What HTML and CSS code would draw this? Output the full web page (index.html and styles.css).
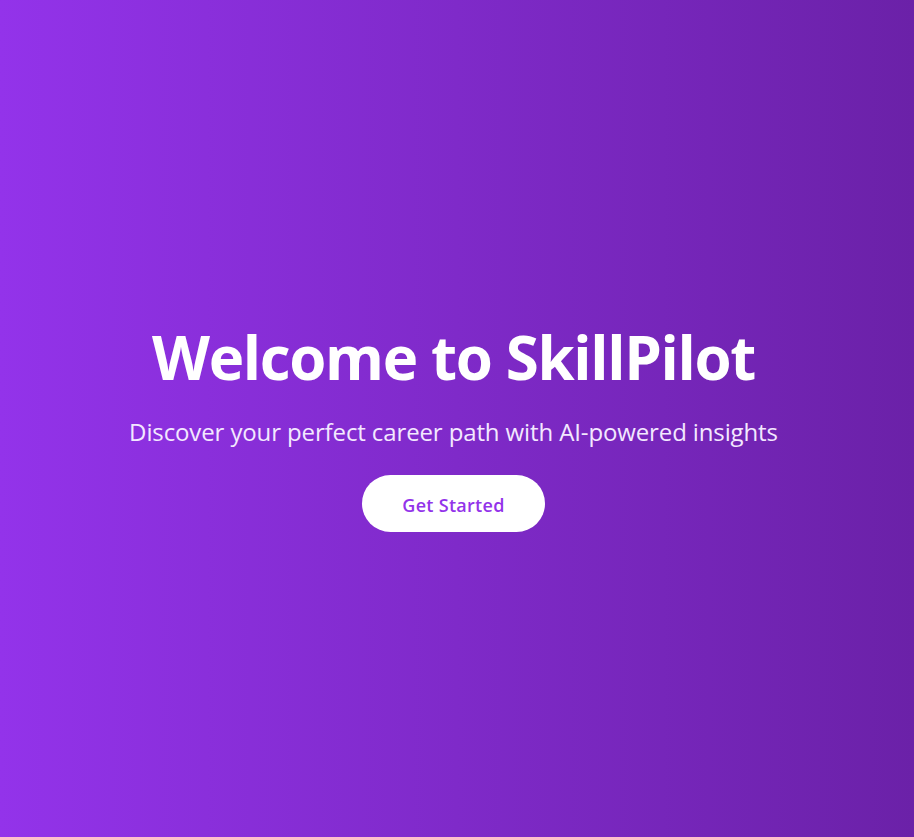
FILE: index.html
```html
<!DOCTYPE html>
<html lang="en">
<head>
<meta charset="utf-8">
<title>SkillPilot</title>
<link rel="stylesheet" href="styles.css">
</head>
<body>
<main class="hero">
  <div class="hero-content">
    <h1 class="hero-title">Welcome to SkillPilot</h1>
    <p class="hero-subtitle">Discover your perfect career path with AI-powered insights</p>
    <button class="hero-button">Get Started</button>
  </div>
</main>
</body>
</html>
```
FILE: styles.css
```css
* { box-sizing: border-box; }
html, body { margin: 0; padding: 0; }
body {
  font-family: "Open Sans", "Noto Sans", sans-serif;
  color: #fff;
}
.hero {
  min-height: 100vh;
  background: linear-gradient(to right, #9333ea, #6b21a8);
  display: flex;
  align-items: center;
  justify-content: center;
  padding: 21px 7px 0 0;
}
.hero-content {
  display: flex;
  flex-direction: column;
  align-items: center;
  text-align: center;
}
.hero-title {
  margin: 0 0 29px;
  font-size: 60px;
  line-height: 60px;
  font-weight: 700;
  letter-spacing: -1.35px;
}
.hero-subtitle {
  margin: 0 0 27px;
  font-size: 24px;
  line-height: 32px;
  color: #f3e8ff;
  letter-spacing: -0.12px;
}
.hero-button {
  font-family: inherit;
  background: #fff;
  color: #9333ea;
  border: none;
  border-radius: 9999px;
  padding: 18px 40px 15px;
  font-size: 18px;
  line-height: 24px;
  font-weight: 600;
  letter-spacing: 0.3px;
  cursor: pointer;
}
```
